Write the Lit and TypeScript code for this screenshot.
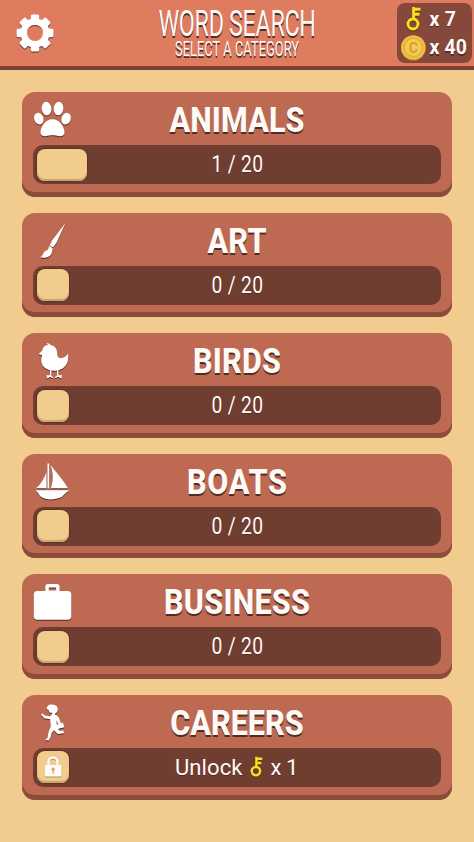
import { LitElement, html, svg, css } from "lit";
import { customElement, property } from "lit/decorators.js";

const key = svg`<g fill="none" stroke="#f8e11c" stroke-width="2.9"><circle cx="7" cy="18" r="5"/><path d="M7.600 13V1M7.600 3.300H14.500M7.600 8.300H13.500"/></g>`;

const icons: Record<string, unknown> = {
  paw: svg`<g transform="translate(-.7 0)"><ellipse cx="14.2" cy="7.6" rx="4.8" ry="6.8" transform="rotate(-6 14.2 7.6)"/><ellipse cx="26.2" cy="7.6" rx="4.8" ry="6.8" transform="rotate(6 26.2 7.6)"/><ellipse cx="6.5" cy="17.7" rx="4.6" ry="6" transform="rotate(-22 6.5 17.7)"/><ellipse cx="33.8" cy="17.7" rx="4.6" ry="6" transform="rotate(22 33.8 17.7)"/><path d="M20.2 18.200c-7 0-11.400 7.200-12 12.400-.4 3.800 2.300 5 5.200 4.600 2.900-.4 4.200-.9 6.800-.9s3.900.5 6.800.9c2.900.4 5.600-.8 5.200-4.600-.6-5.200-5-12.400-12-12.400Z"/></g>`,
  brush: svg`<path d="M32.500 1 23.700 20.500 20 25.500 16.600 23.400 19.400 18ZM16.300 24.100l3.400 2.200-.6 3.400c-1 5-5.500 7-12.400 5.600 3.400-.8 3.200-4.500 5.500-6.200 1.400-1 2.300-.7 2.900-1.900Z"/>`,
  bird: svg`<path d="M5.500 12 9.300 8.800C9.500 5.400 12 3.400 15 3l-1.600-1.500C15.500 1 17 2 17.500 3c4.700.8 6.800 4.500 6.700 8.500-.1 3 1.200 4.800 3.400 4.700 3.400-.1 5.600-1.800 7.400-4.400 1.600 10.500-4.500 17-13.500 17-8.300 0-13.300-4.800-13.300-10.300 0-2.100 1-3.600.9-5.200Z"/><path d="M17.700 28v6l-4 2m4-2h-4.200m4.200 0 2.200 1.800M24.700 28v6l4 2m-4-2h4.300m-4.300 0-2.600 1.800" fill="none" stroke="#fff" stroke-width="1.3"/>`,
  boat: svg`<path d="M14.400.500h1.800v25h-1.800ZM17.400 2c5.500 6.800 13 15.300 17.600 23.300H17.800c2.600-7.500 2.500-15.500-.4-23.300ZM13.500 9v16.300H3C7.800 21.300 11.500 15.200 13.500 9ZM2.500 27.300h34c-3 2-5.600 4.500-7.700 6.700C21.500 37.200 13 37.500 7.500 33.500 6 31.500 4.500 29 2.500 27.300Z"/>`,
  case: svg`<path transform="translate(-.7 0)" fill-rule="evenodd" d="M13 8V3.500C13 2 14 1 15.500 1h9.300c1.500 0 2.500 1 2.500 2.500V8h8.400C37.700 8 39 9.300 39 11.200v22.300c0 2-1.300 3.200-3.300 3.200H4.800c-2 0-3.300-1.200-3.300-3.200V11.200C1.500 9.300 2.800 8 4.800 8Zm3.500-3.500V7.500h7.300v-3Z"/>`,
  runner: svg`<path d="M13.800 5C13.800 1.800 16.100.5 19.100.6c3.900.1 5.900 2.400 5.700 5.200-.1 1.800-1.200 3.200-2.800 3.800v1.200c2.400.5 3.800 2.400 4.500 4.600l1.500 3.800 2-.4 1.300 4.400-6 1.500-.6-.9 1.600 3.100 3.800-.5 1.200 2.800-6.500.7-3.900-3.700-2.400 3.100-1 4.300-1.800 2.800-3.800-.3 2.700-2.400c.3-4.500 1.600-7.500 3.100-11.200l-.6-7.300-6-1-3-3.800 1.200-1 2.500 2 5.200 1.100 2.200-2.400v-1.400c-2 .5-3.400-.5-3.200-2.200Z"/><path d="m23.300 16.500 2.100 3.600-1.500.7Z" fill="#8b4938"/>`,
};

/* Squeezes the glyphs to a condensed face and tracks them out to the given width. */
const label = (
  text: string, x: number, y: number, size: number, width: number, weight: number, squeeze = 1, depth = 2
) => svg`<g transform="translate(${x} ${y}) scale(${squeeze} 1)"><text font-size=${size} font-weight=${weight} textLength=${width / squeeze} lengthAdjust="spacing" fill="#fffaf6" style="text-shadow: 0 ${depth}px 0 #522b24">${text}</text></g>`;

interface Category {
  name: string;
  icon: string;
  width: number;
  done: number;
  locked?: boolean;
}

const categories: Category[] = [
  { name: "ANIMALS", icon: "paw", width: 135, done: 1 },
  { name: "ART", icon: "brush", width: 59, done: 0 },
  { name: "BIRDS", icon: "bird", width: 88, done: 0 },
  { name: "BOATS", icon: "boat", width: 100, done: 0 },
  { name: "BUSINESS", icon: "case", width: 146, done: 0 },
  { name: "CAREERS", icon: "runner", width: 133.5, done: 0, locked: true },
];

@customElement("category-card")
class CategoryCard extends LitElement {
  @property({ attribute: false }) category!: Category;

  static styles = css`
    :host {
      display: block;
      box-sizing: border-box;
      height: 104.6px;
      padding: 8px 11px 0;
      border-radius: 13px;
      background: #be6a52;
      box-shadow: inset 0 -5px 0 #8c4c3a;
    }
    svg { display: block; overflow: visible; font-family: Roboto, "Liberation Sans", sans-serif; }
    .top { display: grid; grid-template-columns: 40px 1fr 40px; height: 45px; }
    .icon { fill: #fff; filter: drop-shadow(0 1.5px 0 #562c24); margin-top: 1px; }
    .bar {
      display: grid;
      grid-template-columns: 51px 300px;
      align-items: center;
      box-sizing: border-box;
      height: 39px;
      padding: 0 3.5px;
      border-radius: 10px;
      background: #703e31;
    }
    .fill {
      display: grid;
      place-items: center;
      height: 32px;
      border-radius: 8px;
      background: #f1cc8d;
      box-shadow: inset 0 -2px 1px #c9a46e, 0 0 1px 1px #603328;
    }
    .lock { filter: drop-shadow(0 1px 0 #b38f60); }
    .key { filter: drop-shadow(0 1.5px 0 #563016); }
  `;

  render() {
    const c = this.category;
    return html`
      <div class="top">
        <svg class="icon" width="40" height="38" viewBox="0 0 40 38">${icons[c.icon]}</svg>
        <svg width="328" height="45">${label(c.name, 164 - c.width / 2, 31.500, 35.500, c.width, 800, 0.86)}</svg>
      </div>
      <div class="bar">
        <div class="fill" style="width:${c.done ? 50 : 32}px">
          ${c.locked ? html`<svg class="lock" width="20" height="24" viewBox="0 0 20 24">
            <path d="M5.500 11V7a4.500 4.500 0 0 1 9 0v4" fill="none" stroke="#fffaf3" stroke-width="2.600"/>
            <rect x="2" y="10" width="16.500" height="11.500" rx="1" fill="#fffaf3"/>
            <path d="M10.200 15v4" stroke="#dca878" stroke-width="1.300"/><circle cx="10.200" cy="14.300" r="1.800" fill="#dca878"/>
          </svg>` : ""}
        </div>
        ${c.locked
          ? html`<svg width="300" height="39">
              ${label("Unlock", 87, 27.2, 22.5, 67.5, 400, 0.98, 1)}
              <svg class="key" x="162" y="8" width="13.500" height="21" viewBox="0 0 16 25">${key}</svg>
              ${label("x 1", 182.5, 27.2, 22.5, 28, 400, 0.98, 1)}
            </svg>`
          : html`<svg width="300" height="39">${label(`${c.done} / 20`, 123.500, 27, 23, 51.500, 400, 0.84, 1)}</svg>`}
      </div>`;
  }
}

@customElement("app-root")
class AppRoot extends LitElement {
  static styles = css`
    :host { display: block; min-height: 842px; background: #f2cc8e; }
    svg { display: block; overflow: visible; font-family: Roboto, "Liberation Sans", sans-serif; }
    .header {
      display: grid;
      grid-template-columns: 158px 1fr 77px;
      box-sizing: border-box;
      height: 70px;
      background: #df7b5f;
      border-bottom: 4px solid #78402f;
    }
    .gear { margin: 14px 0 0 16px; filter: drop-shadow(0 1.5px 0 #562c24); }
    .wallet {
      box-sizing: border-box;
      width: 75px;
      height: 60px;
      margin-top: 3px;
      border-radius: 8px;
      background: #86483a;
    }
    .key { filter: drop-shadow(0 1.5px 0 #563016); }
    .list { display: grid; gap: 16px; padding: 22px 22px 0; }
  `;

  render() {
    return html`
      <header class="header">
        <svg class="gear" width="38" height="38" viewBox="-19 -19 38 38">
          <g fill="#fff">${[0, 45, 90, 135].map((a) => svg`<rect x="-4.200" y="-18.500" width="8.400" height="37" rx="1.500" transform="rotate(${a})"/>`)}</g>
          <circle r="11" fill="none" stroke="#fff" stroke-width="7"/>
          <circle r="8" fill="#df7b5f"/>
          <path d="M-8 0a8 8 0 0 1 16 0a8 7 0 0 0-16 0" fill="#703a2d"/>
        </svg>
        <svg width="239" height="66">
          ${label("WORD SEARCH", 0.5, 36, 37, 157.500, 450, 0.63, 1.5)}
          ${label("SELECT A CATEGORY", 17, 56, 20, 124, 450, 0.64, 1.5)}
        </svg>
        <div class="wallet">
          <svg width="75" height="60">
            <svg class="key" x="9" y="3" width="16" height="25" viewBox="0 0 16 25">${key}</svg>
            ${label("x 7", 32.500, 22.500, 20, 26.500, 700, 0.97, 1.5)}
            <circle cx="16.300" cy="45.500" r="12.300" fill="#a87526"/>
            <circle cx="16.300" cy="44.500" r="12.300" fill="#efbd42"/>
            <circle cx="16.300" cy="44.500" r="9" fill="#f4cc50" stroke="#dda63b"/>
            <text x="16.300" y="49.500" font-size="14" font-weight="700" text-anchor="middle" fill="#dc9a39">C</text>
            ${label("x 40", 32.500, 51, 20, 37.500, 700, 0.97, 1.5)}
          </svg>
        </div>
      </header>
      <main class="list">
        ${categories.map((c) => html`<category-card .category=${c}></category-card>`)}
      </main>`;
  }
}
